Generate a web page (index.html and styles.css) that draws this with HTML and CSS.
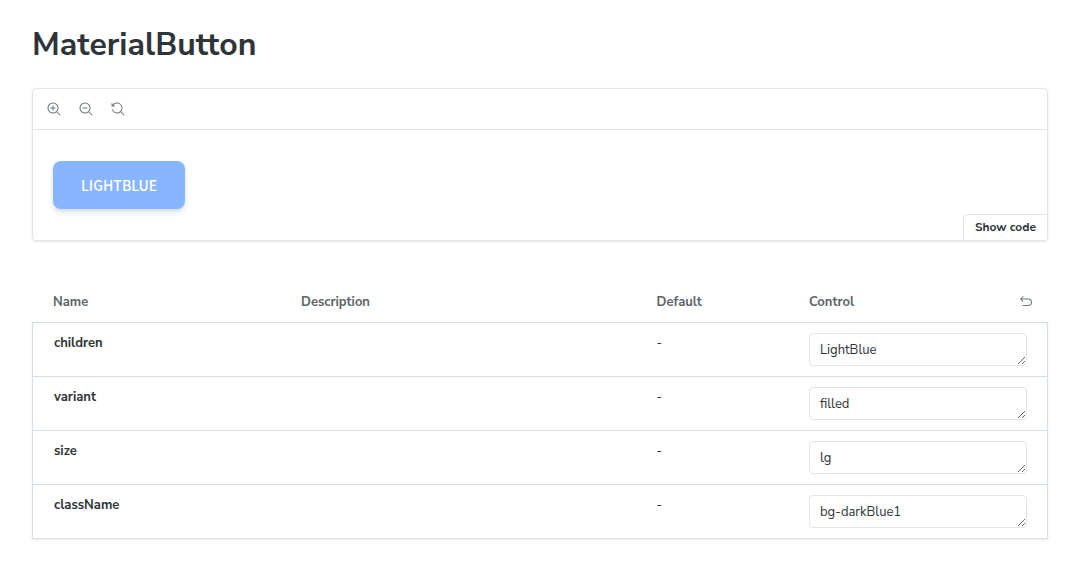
FILE: index.html
```html
<!DOCTYPE html>
<html lang="en">
<head>
    <meta charset="UTF-8">
    <meta name="viewport" content="width=device-width, initial-scale=1.0">
    <title>MaterialButton</title>
    <link rel="stylesheet" href="styles.css">
</head>
<body>
<main class="docs">
    <h1>MaterialButton</h1>

    <section class="preview">
        <div class="toolbar">
            <button type="button" class="icon-button" aria-label="Zoom in">
                <svg viewBox="0 0 14 14"><path d="M6 3.5a.5.5 0 01.5.5v1.5H8a.5.5 0 010 1H6.5V8a.5.5 0 01-1 0V6.5H4a.5.5 0 010-1h1.5V4a.5.5 0 01.5-.5z"/><path fill-rule="evenodd" d="M9.544 10.206a5.5 5.5 0 11.662-.662.5.5 0 01.148.102l3 3a.5.5 0 01-.708.708l-3-3a.5.5 0 01-.102-.148zM10.5 6a4.5 4.5 0 11-9 0 4.5 4.5 0 019 0z"/></svg>
            </button>
            <button type="button" class="icon-button" aria-label="Zoom out">
                <svg viewBox="0 0 14 14"><path d="M4 5.5a.5.5 0 000 1h4a.5.5 0 000-1H4z"/><path fill-rule="evenodd" d="M9.544 10.206a5.5 5.5 0 11.662-.662.5.5 0 01.148.102l3 3a.5.5 0 01-.708.708l-3-3a.5.5 0 01-.102-.148zM10.5 6a4.5 4.5 0 11-9 0 4.5 4.5 0 019 0z"/></svg>
            </button>
            <button type="button" class="icon-button" aria-label="Reset zoom">
                <svg viewBox="0 0 14 14"><path d="M1.5 2.837V1.5a.5.5 0 00-1 0V4a.5.5 0 00.5.5h2.5a.5.5 0 000-1H2.258a4.5 4.5 0 11-.496 4.016.5.5 0 10-.942.337 5.502 5.502 0 008.724 2.353.5.5 0 00.102.148l3 3a.5.5 0 00.708-.708l-3-3a.5.5 0 00-.148-.102A5.5 5.5 0 101.5 2.837z"/></svg>
            </button>
        </div>
        <div class="story">
            <button type="button" class="material-button">LightBlue</button>
        </div>
        <button type="button" class="show-code">Show code</button>
    </section>

    <table class="args">
        <thead>
            <tr>
                <th class="col-name">Name</th>
                <th class="col-description">Description</th>
                <th class="col-default">Default</th>
                <th class="col-control">
                    <div class="control-head">
                        Control
                        <button type="button" class="icon-button reset" aria-label="Reset controls">
                            <svg viewBox="0 0 14 14"><path d="M4.354 1.146a.5.5 0 010 .708L2.707 3.500H9.250a3.750 3.750 0 010 7.500H4a.5.5 0 010-1h5.250a2.750 2.750 0 100-5.500H2.707l1.647 1.646a.5.5 0 11-.708.708l-2.500-2.500a.5.5 0 010-.708l2.500-2.500a.5.5 0 01.708 0z"/></svg>
                        </button>
                    </div>
                </th>
            </tr>
        </thead>
        <tbody>
            <tr>
                <td class="arg-name"><label for="children">children</label></td>
                <td></td>
                <td>-</td>
                <td class="control"><textarea id="children" rows="1">LightBlue</textarea></td>
            </tr>
            <tr>
                <td class="arg-name"><label for="variant">variant</label></td>
                <td></td>
                <td>-</td>
                <td class="control"><textarea id="variant" rows="1">filled</textarea></td>
            </tr>
            <tr>
                <td class="arg-name"><label for="size">size</label></td>
                <td></td>
                <td>-</td>
                <td class="control"><textarea id="size" rows="1">lg</textarea></td>
            </tr>
            <tr>
                <td class="arg-name"><label for="className">className</label></td>
                <td></td>
                <td>-</td>
                <td class="control"><textarea id="className" rows="1">bg-darkBlue1</textarea></td>
            </tr>
        </tbody>
    </table>
</main>
</body>
</html>
```
FILE: styles.css
```css
* {
    box-sizing: border-box;
}
body {
    margin: 0;
    font-family: "Nunito Sans", Lato, "Open Sans", sans-serif;
    font-size: 13px;
    line-height: 20px;
    color: #2e3438;
    background: #fff;
}
button,
textarea {
    font-family: inherit;
}
.docs {
    padding: 25px 32px;
}
h1 {
    margin: 0 0 23px;
    font-size: 32px;
    line-height: 40px;
    font-weight: 700;
}

/* Story preview */
.preview {
    position: relative;
    border: 1px solid #dfe5e9;
    border-radius: 4px;
    box-shadow: 0 1px 3px rgba(0, 0, 0, 0.1);
    overflow: hidden;
}
.toolbar {
    display: flex;
    align-items: center;
    gap: 4px;
    height: 41px;
    padding: 0 7px;
    border-bottom: 1px solid #dfe5e9;
}
.icon-button {
    display: flex;
    align-items: center;
    justify-content: center;
    width: 28px;
    height: 28px;
    padding: 0;
    border: 0;
    background: none;
    cursor: pointer;
}
.icon-button svg {
    width: 14px;
    height: 14px;
    fill: #6b7479;
}
.story {
    padding: 31px 20px;
}
.material-button {
    display: block;
    padding: 14px 28px;
    border: 0;
    border-radius: 8px;
    background: #88b5ff;
    color: #fff;
    font-family: "Noto Sans CJK JP", sans-serif;
    font-size: 14px;
    line-height: 20px;
    font-weight: 500;
    text-transform: uppercase;
    box-shadow: 0 3px 5px rgba(40, 80, 130, 0.2);
    cursor: pointer;
}
.show-code {
    position: absolute;
    right: 0;
    bottom: 0;
    padding: 4px 11px 5px;
    border: 1px solid #dfe5e9;
    border-width: 1px 0 0 1px;
    border-radius: 4px 0 0 0;
    background: #fff;
    color: #2e3438;
    font-size: 12px;
    line-height: 16px;
    font-weight: 700;
    cursor: pointer;
}

/* Args table */
.args {
    width: 100%;
    margin-top: 40px;
    table-layout: fixed;
    border-collapse: separate;
    border-spacing: 0;
}
.args th,
.args td {
    padding: 10px 15px;
    text-align: left;
    vertical-align: top;
}
.args th:first-child,
.args td:first-child {
    padding-left: 21px;
}
.args th:last-child,
.args td:last-child {
    padding-right: 20px;
}
.args th {
    padding-top: 11px;
    color: #5c6469;
    font-weight: 700;
}
.col-name,
.col-control {
    width: 25%;
}
.col-description {
    width: 35%;
}
.col-default {
    width: 15%;
}
.control-head {
    display: flex;
    align-items: center;
    justify-content: space-between;
    height: 20px;
}
.reset {
    margin-right: -12px;
}
.args td {
    height: 54px;
    border-top: 1px solid #d5dee2;
}
.args td:first-child {
    border-left: 1px solid #d5dee2;
}
.args td:last-child {
    border-right: 1px solid #d5dee2;
}
.args tr:last-child td {
    border-bottom: 1px solid #d5dee2;
}
.args tbody {
    box-shadow: 0 1px 3px rgba(0, 0, 0, 0.08);
}
.arg-name {
    font-weight: 700;
}
.args textarea {
    display: block;
    width: 100%;
    height: 33px;
    padding: 6px 10px;
    border: 1px solid #dfe5e9;
    border-radius: 4px;
    background: #fff;
    color: #2e3438;
    font-size: 13px;
    line-height: 20px;
    resize: vertical;
    overflow: hidden;
}
```
